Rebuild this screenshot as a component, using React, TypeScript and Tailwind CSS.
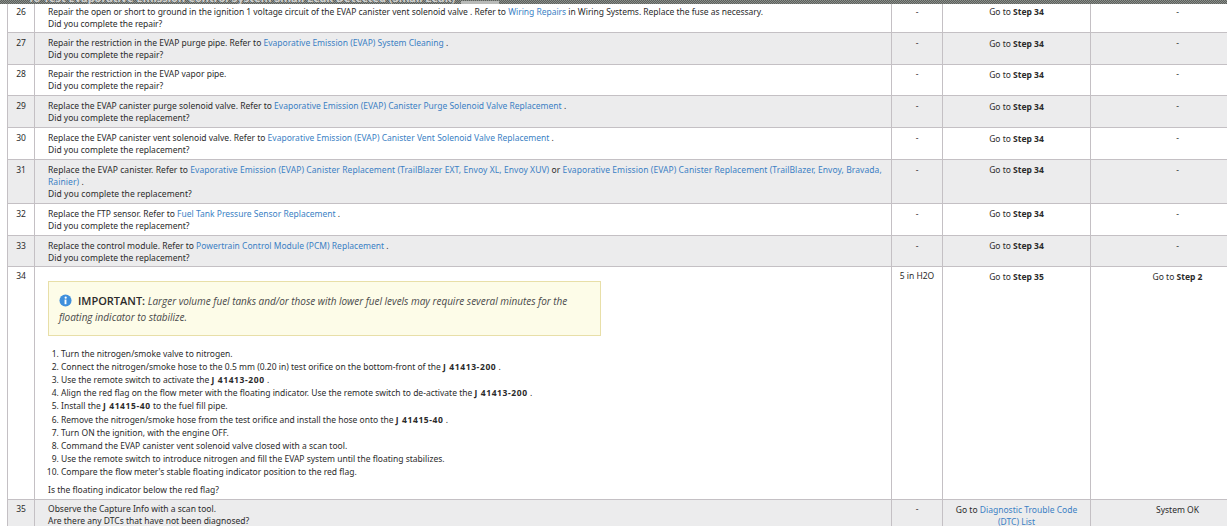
function L({ children }: { children: React.ReactNode }) {
  return <a className="text-[#3b7fc4]">{children}</a>;
}
function B({ children }: { children: React.ReactNode }) {
  return <b className="font-bold">{children}</b>;
}
function J({ children }: { children: React.ReactNode }) {
  return <b className="font-bold tracking-[0.6px]">{children}</b>;
}

type Row = {
  n: string;
  h: string;
  pad: string;
  goPad: string;
  track?: string;
  body: React.ReactNode;
  q: string;
  alt?: boolean;
};

const rows: Row[] = [
  { n: "26", h: "h-[28px]", pad: "pt-[2px]", goPad: "pt-[2px]", track: "tracking-[-0.03px]", body: <>Repair the open or short to ground in the ignition 1 voltage circuit of the EVAP canister vent solenoid valve . Refer to <L>Wiring Repairs</L> in Wiring Systems. Replace the fuse as necessary.</>, q: "Did you complete the repair?" },
  { n: "27", h: "h-[32px]", pad: "pt-[4px]", goPad: "pt-[5px]", alt: true, body: <>Repair the restriction in the EVAP purge pipe. Refer to <L>Evaporative Emission (EVAP) System Cleaning</L> .</>, q: "Did you complete the repair?" },
  { n: "28", h: "h-[31px]", pad: "pt-[3px]", goPad: "pt-[4px]", body: <>Repair the restriction in the EVAP vapor pipe.</>, q: "Did you complete the repair?" },
  { n: "29", h: "h-[32px]", pad: "pt-[4px]", goPad: "pt-[5px]", alt: true, body: <>Replace the EVAP canister purge solenoid valve. Refer to <L>Evaporative Emission (EVAP) Canister Purge Solenoid Valve Replacement</L> .</>, q: "Did you complete the replacement?" },
  { n: "30", h: "h-[32px]", pad: "pt-[4px]", goPad: "pt-[5px]", body: <>Replace the EVAP canister vent solenoid valve. Refer to <L>Evaporative Emission (EVAP) Canister Vent Solenoid Valve Replacement</L> .</>, q: "Did you complete the replacement?" },
  { n: "31", h: "h-[44px]", pad: "pt-[4px]", goPad: "pt-[4px]", track: "tracking-[0.07px]", alt: true, body: <>Replace the EVAP canister. Refer to <L>Evaporative Emission (EVAP) Canister Replacement (TrailBlazer EXT, Envoy XL, Envoy XUV)</L> or <L>Evaporative Emission (EVAP) Canister Replacement (TrailBlazer, Envoy, Bravada, Rainier)</L> .</>, q: "Did you complete the replacement?" },
  { n: "32", h: "h-[32px]", pad: "pt-[4px]", goPad: "pt-[4px]", body: <>Replace the FTP sensor. Refer to <L>Fuel Tank Pressure Sensor Replacement</L> .</>, q: "Did you complete the replacement?" },
  { n: "33", h: "h-[31px]", pad: "pt-[4px]", goPad: "pt-[4px]", alt: true, body: <>Replace the control module. Refer to <L>Powertrain Control Module (PCM) Replacement</L> .</>, q: "Did you complete the replacement?" },
];

const steps: React.ReactNode[] = [
  "Turn the nitrogen/smoke valve to nitrogen.",
  <>Connect the nitrogen/smoke hose to the 0.5 mm (0.20 in) test orifice on the bottom-front of the <J>J 41413-200</J> .</>,
  <>Use the remote switch to activate the <J>J 41413-200</J> .</>,
  <>Align the red flag on the flow meter with the floating indicator. Use the remote switch to de-activate the <J>J 41413-200</J> .</>,
  <>Install the <J>J 41415-40</J> to the fuel fill pipe.</>,
  <>Remove the nitrogen/smoke hose from the test orifice and install the hose onto the <J>J 41415-40</J> .</>,
  "Turn ON the ignition, with the engine OFF.",
  "Command the EVAP canister vent solenoid valve closed with a scan tool.",
  "Use the remote switch to introduce nitrogen and fill the EVAP system until the floating stabilizes.",
  "Compare the flow meter's stable floating indicator position to the red flag.",
];

const cell = "border-r border-b border-[#c4c0c4] align-top";
const altBg =
  "bg-[repeating-conic-gradient(#e4e2e8_0_25%,#f4f6f2_0_50%)] bg-[length:2px_2px]";

export default function App() {
  return (
    <div className="h-[526px] w-[1227px] overflow-hidden bg-white font-['Noto_Sans',sans-serif] text-[8.5px] leading-[12px] text-[#2b2b2b]">
      <div className="flex h-[4px] items-end overflow-hidden bg-[repeating-conic-gradient(#5c605c_0_25%,#8a8e8a_0_50%)] bg-[length:2px_2px] pl-[28px]">
        <span className="shrink-0 whitespace-nowrap text-[11px] leading-[12px] font-bold text-[#cfd0cf]">
          To Test Evaporative Emission Control System Small Leak Detected (Small Leak)
        </span>
        <span className="ml-[6px] h-[3px] w-[38px] shrink-0 bg-[#b8bab8]" />
      </div>
      <table className="ml-[7px] w-[1257px] table-fixed border-collapse border-l border-[#c4c0c4]">
        <colgroup>
          <col className="w-[27px]" />
          <col className="w-[857px]" />
          <col className="w-[51px]" />
          <col className="w-[148px]" />
          <col className="w-[174px]" />
        </colgroup>
        <tbody>
          {rows.map((r) => (
            <tr key={r.n} className={r.h}>
              <td className={`${cell} ${r.pad} ${r.alt ? altBg : ""} text-center`}>{r.n}</td>
              <td className={`${cell} ${r.pad} ${r.alt ? altBg : ""} ${r.track ?? ""} pl-[13px] pr-[8px]`}>
                <p>{r.body}</p>
                <p>{r.q}</p>
              </td>
              <td className={`${cell} ${r.pad} ${r.alt ? altBg : ""} text-center`}>-</td>
              <td className={`${cell} ${r.goPad} ${r.alt ? altBg : ""} text-center`}>
                Go to <B>Step 34</B>
              </td>
              <td className={`${cell} ${r.pad} ${r.alt ? altBg : ""} text-center`}>-</td>
            </tr>
          ))}
          <tr className="h-[233px]">
            <td className={`${cell} pt-[3px] text-center`}>34</td>
            <td className={`${cell} pl-[13px] pr-[8px] pt-[14px]`}>
              <div className="h-[55px] w-[553px] border border-[#e8dfa8] bg-[#fdfce8] px-[10px] pt-[11px] font-['Open_Sans',sans-serif] text-[10px] leading-[16px] italic tracking-[-0.02px] text-[#4a4a4a]">
                <svg viewBox="0 0 14 14" className="mr-[6px] inline-block h-[13px] w-[13px] align-[-2px]">
                  <circle cx="7" cy="7" r="6.5" fill="#3f8fdc" />
                  <rect x="6" y="6" width="2" height="5" fill="#fff" />
                  <circle cx="7.2" cy="4" r="1.2" fill="#fff" />
                </svg>
                <span className="text-[11px] font-semibold text-[#2b2b2b] not-italic">IMPORTANT:</span> Larger volume fuel tanks and/or those with lower fuel levels may require several minutes for the floating indicator to stabilize.
              </div>
              <ol className="mt-[11px] ml-[13px] list-decimal leading-[13.2px]">
                {steps.map((s, i) => (
                  <li key={i}>{s}</li>
                ))}
              </ol>
              <p className="mt-[5px]">Is the floating indicator below the red flag?</p>
            </td>
            <td className={`${cell} pt-[3px] text-center`}>5 in H2O</td>
            <td className={`${cell} pt-[4px] text-center`}>Go to <B>Step 35</B></td>
            <td className={`${cell} pt-[4px] text-center`}>Go to <B>Step 2</B></td>
          </tr>
          <tr className="h-[40px]">
            <td className={`${cell} ${altBg} pt-[3px] text-center`}>35</td>
            <td className={`${cell} ${altBg} pl-[13px] pr-[8px] pt-[3px]`}>
              <p>Observe the Capture Info with a scan tool.</p>
              <p>Are there any DTCs that have not been diagnosed?</p>
            </td>
            <td className={`${cell} ${altBg} pt-[3px] text-center`}>-</td>
            <td className={`${cell} ${altBg} px-[8px] pt-[4px] text-center`}>Go to <L>Diagnostic Trouble Code (DTC) List</L></td>
            <td className={`${cell} ${altBg} pt-[4px] text-center`}>System OK</td>
          </tr>
        </tbody>
      </table>
    </div>
  );
}
